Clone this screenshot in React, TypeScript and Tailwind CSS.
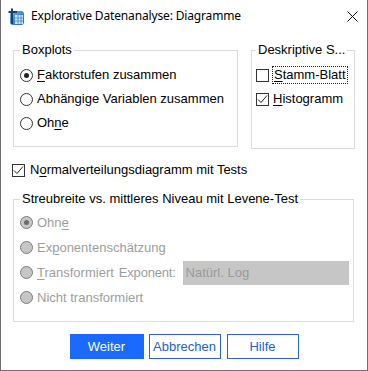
import type { ReactNode } from "react";

const FONT = "font-['Liberation_Sans',Arial,sans-serif]";

function Radio({ checked = false, disabled = false }: { checked?: boolean; disabled?: boolean }) {
  return (
    <span
      className={
        "grid place-items-center w-[13px] h-[13px] rounded-full border flex-shrink-0 " +
        (disabled ? "border-[#7c7c7c] bg-[#c6c6c6]" : "border-[#333] bg-white")
      }
    >
      {checked && (
        <span className={"w-[5px] h-[5px] rounded-full " + (disabled ? "bg-[#6c6c6c]" : "bg-[#222]")} />
      )}
    </span>
  );
}

function Checkbox({ checked = false }: { checked?: boolean }) {
  return (
    <span className="grid place-items-center w-[13px] h-[13px] border border-[#333] bg-white flex-shrink-0">
      {checked && (
        <svg width="11" height="11" viewBox="0 0 11 11" fill="none">
          <path d="M1 5.5 L4 8.5 L10 1.5" stroke="#222" strokeWidth="1" />
        </svg>
      )}
    </span>
  );
}

function Group({
  label,
  labelLeft,
  className,
  children
}: {
  label: string;
  labelLeft: string;
  className: string;
  children: ReactNode;
}) {
  return (
    <div className={"relative border border-[#dcdcdc] " + className}>
      <span className={"absolute -top-[9px] bg-white px-[2px] leading-[15px] text-black whitespace-nowrap " + labelLeft}>
        {label}
      </span>
      {children}
    </div>
  );
}

function U({ children }: { children: ReactNode }) {
  return <span className="underline underline-offset-[2px] decoration-1">{children}</span>;
}

function AppIcon() {
  return (
    <svg width="16" height="17" viewBox="0 0 16 17">
      <defs>
        <linearGradient id="ig" x1="0" y1="0" x2="1" y2="1">
          <stop offset="0" stopColor="#6fb6e8" />
          <stop offset="1" stopColor="#1e5ea8" />
        </linearGradient>
      </defs>
      <rect x="2" y="3" width="14" height="14" rx="3" fill="url(#ig)" />
      <rect x="7" y="7" width="8" height="9" fill="#cfe6f8" />
      <path d="M7 10 H15 M7 13 H15 M10 7 V16 M13 7 V16" stroke="#3b7fc4" strokeWidth="0.8" />
      <path d="M4 0.5 V16 M0.5 4 H9" stroke="#17407a" strokeWidth="2" />
    </svg>
  );
}

export default function App() {
  return (
    <div className={"w-[368px] h-[371px] bg-white border-l border-r border-b border-[#6e6e6e] flex flex-col text-[13px] text-black " + FONT}>
      {/* title bar */}
      <div className="h-[32px] flex items-center pl-[7px] pr-[9px] flex-shrink-0">
        <AppIcon />
        <span className="ml-[7px] font-['Noto_Sans',sans-serif] text-[12px] tracking-[-0.15px] text-black">
          Explorative Datenanalyse: Diagramme
        </span>
        <svg className="ml-auto" width="11" height="11" viewBox="0 0 11 11">
          <path d="M0.5 0.5 L10.5 10.5 M10.5 0.5 L0.5 10.5" stroke="#111" strokeWidth="1" />
        </svg>
      </div>

      {/* top groups */}
      <div className="flex items-start mt-[18px] ml-[12px]">
        <Group label="Boxplots" labelLeft="left-[6px]" className="w-[225px] h-[97px] pt-[12px] pl-[6px]">
          <div className="h-[24px] flex items-center gap-[4px]">
            <Radio checked />
            <span><U>F</U>aktorstufen zusammen</span>
          </div>
          <div className="h-[24px] flex items-center gap-[4px]">
            <Radio />
            <span>Abhängige Variablen zusammen</span>
          </div>
          <div className="h-[24px] flex items-center gap-[4px]">
            <Radio />
            <span>Oh<U>n</U>e</span>
          </div>
        </Group>

        <Group label="Deskriptive S..." labelLeft="left-[4px]" className="ml-[13px] w-[104px] h-[99px] pt-[12px] pl-[4px]">
          <div className="h-[24px] flex items-center gap-[3px]">
            <Checkbox />
            <span className="h-[18px] leading-[16px] pl-[1px] pr-[1px] border border-dotted border-[#222] whitespace-nowrap">
              <U>S</U>tamm-Blatt
            </span>
          </div>
          <div className="h-[24px] flex items-center gap-[4px]">
            <Checkbox checked />
            <span><U>H</U>istogramm</span>
          </div>
        </Group>
      </div>

      {/* normal distribution */}
      <div className="mt-[11px] ml-[11px] h-[20px] flex items-center gap-[5px]">
        <Checkbox checked />
        <span>N<U>o</U>rmalverteilungsdiagramm mit Tests</span>
      </div>

      {/* spread vs level */}
      <Group
        label="Streubreite vs. mittleres Niveau mit Levene-Test"
        labelLeft="left-[6px]"
        className="mt-[19px] ml-[12px] w-[341px] h-[123px] pt-[10px] pl-[6px] text-[#9d9d9d]"
      >
        <div className="h-[25px] flex items-center gap-[4px]">
          <Radio checked disabled />
          <span>Ohn<U>e</U></span>
        </div>
        <div className="h-[25px] flex items-center gap-[4px]">
          <Radio disabled />
          <span>Ex<U>p</U>onentenschätzung</span>
        </div>
        <div className="h-[25px] flex items-center">
          <Radio disabled />
          <span className="ml-[4px]"><U>T</U>ransformiert</span>
          <span className="ml-[5px] tracking-[-0.2px]">Exponent:</span>
          <div className="ml-[7px] w-[166px] h-[24px] bg-[#c6c6c6] flex items-center pl-[3px] text-[#9a9a9a]">
            Natürl. Log
          </div>
        </div>
        <div className="h-[25px] flex items-center gap-[4px]">
          <Radio disabled />
          <span>Nicht transformiert</span>
        </div>
      </Group>

      {/* buttons */}
      <div className="mt-[12px] flex justify-center">
        <button type="button" className="w-[74px] h-[25px] bg-[#1a6aff] text-white text-[13px]">
          Weiter
        </button>
        <button type="button" className="ml-[5px] w-[72px] h-[25px] border border-[#2b63cf] bg-white text-[#2860c6] text-[13px]">
          Abbrechen
        </button>
        <button type="button" className="ml-[6px] w-[72px] h-[25px] border border-[#2b63cf] bg-white text-[#2860c6] text-[13px]">
          Hilfe
        </button>
      </div>
    </div>
  );
}
